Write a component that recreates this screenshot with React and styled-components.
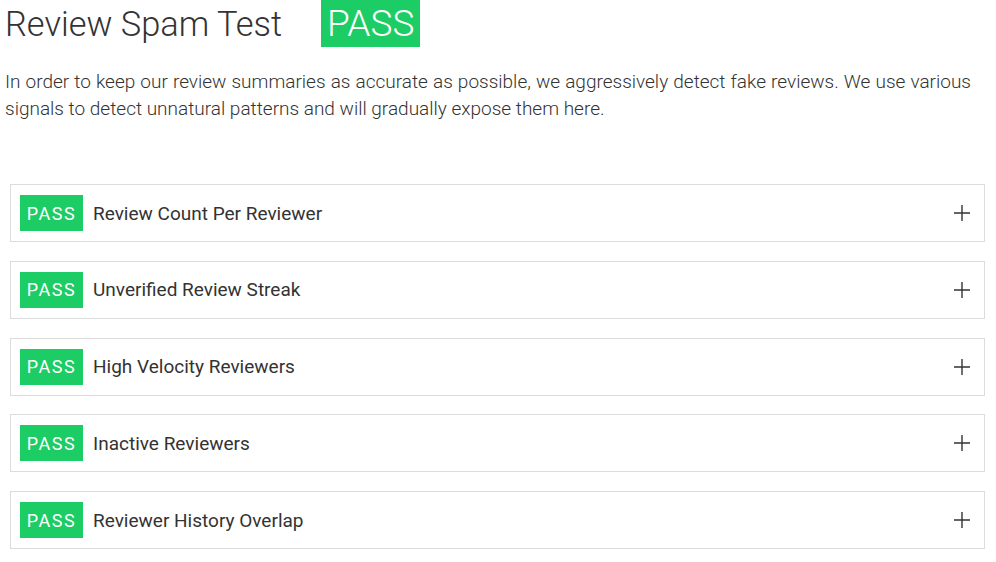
import React from "react";
import styled, { createGlobalStyle } from "styled-components";

const GlobalStyle = createGlobalStyle`
  body {
    margin: 0;
    background: #ffffff;
    font-family: Roboto, "Liberation Sans", sans-serif;
  }
`;

const StPage = styled.div`
  width: 996px;
  padding: 0 11px 0 5px;
  box-sizing: border-box;
`;
const StHeader = styled.div`
  display: flex;
  align-items: center;
  height: 47px;
`;
const StTitle = styled.h1`
  margin: 0;
  font-size: 34.4px;
  font-weight: 300;
  color: #333;
`;
const StBigBadge = styled.span`
  margin-left: 39px;
  height: 47px;
  display: flex;
  align-items: center;
  padding: 0 6px;
  background: #1ccc64;
  color: #fff;
  font-size: 37px;
  font-weight: 300;
`;
const StIntro = styled.p`
  margin: 21px 14px 0 0;
  font-size: 19px;
  line-height: 27px;
  font-weight: 300;
  color: #333;
  text-align: justify;
`;
const StList = styled.div`
  margin: 62px 0 0 5px;
  display: flex;
  flex-direction: column;
  gap: 18.75px;
`;
const StCard = styled.div`
  display: flex;
  align-items: center;
  height: 58px;
  box-sizing: border-box;
  padding: 0 13px 0 9px;
  border: 1px solid #dcdcdc;
  .label {
    flex: 1;
    margin-left: 10px;
    font-size: 19px;
    color: #333;
  }
`;
const StBadge = styled.span`
  width: 63px;
  height: 36px;
  display: flex;
  align-items: center;
  justify-content: center;
  background: #1ccc64;
  color: #fff;
  font-size: 18px;
  letter-spacing: 1.5px;
`;

const tests = [
  "Review Count Per Reviewer",
  "Unverified Review Streak",
  "High Velocity Reviewers",
  "Inactive Reviewers",
  "Reviewer History Overlap",
];

export default function App() {
  return (
    <>
      <GlobalStyle />
      <StPage>
        <StHeader>
          <StTitle>Review Spam Test</StTitle>
          <StBigBadge>PASS</StBigBadge>
        </StHeader>
        <StIntro>
          In order to keep our review summaries as accurate as possible, we
          aggressively detect fake reviews. We use various signals to detect
          unnatural patterns and will gradually expose them here.
        </StIntro>
        <StList>
          {tests.map((name) => (
            <StCard key={name}>
              <StBadge>PASS</StBadge>
              <span className={"label"}>{name}</span>
              <svg width="18" height="18" viewBox="0 0 18 18">
                <path d="M9 1v16M1 9h16" stroke="#333" strokeWidth="1.4" fill="none" />
              </svg>
            </StCard>
          ))}
        </StList>
      </StPage>
    </>
  );
}
